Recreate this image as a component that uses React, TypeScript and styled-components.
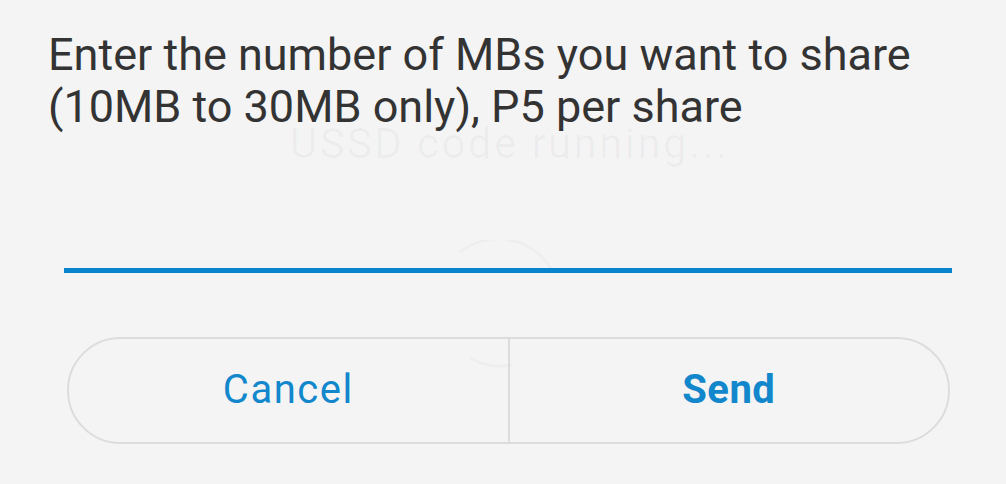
import React from "react";
import styled, { createGlobalStyle } from "styled-components";

const GlobalStyle = createGlobalStyle`
  html, body {
    margin: 0;
    padding: 0;
    background: #f4f4f4;
  }
  body {
    font-family: Roboto, "Noto Sans", "Liberation Sans", sans-serif;
  }
`;

const Dialog = styled.div`
  position: relative;
  width: 1006px;
  height: 484px;
  overflow: hidden;
  background: #f4f4f4;
  display: flex;
  flex-direction: column;
`;

// faint progress popup left behind the prompt
const Backdrop = styled.div`
  position: absolute;
  left: 0;
  top: 0;
  width: 100%;
  height: 100%;
  pointer-events: none;
`;

const GhostText = styled.div`
  position: absolute;
  left: 290px;
  top: 132px;
  font-size: 42px;
  font-weight: 400;
  letter-spacing: 2.4px;
  line-height: 24px;
  color: rgba(0, 0, 0, 0.03);
  white-space: nowrap;
`;

const Spinner = styled.svg`
  position: absolute;
  left: 440px;
  top: 240px;
`;

const Message = styled.p`
  position: relative;
  margin: 0;
  padding: 29px 48px 0;
  font-size: 45px;
  line-height: 52px;
  color: #333;
`;

const Field = styled.input`
  position: relative;
  display: block;
  box-sizing: border-box;
  margin: 85px 54px 0 64px;
  width: calc(100% - 118px);
  height: 55px;
  padding: 0;
  border: none;
  border-bottom: 5px solid #0784cc;
  background: transparent;
  font-family: inherit;
  font-size: 40px;
  color: #333;
  outline: none;
`;

const ButtonBar = styled.div`
  position: relative;
  display: flex;
  box-sizing: border-box;
  margin: 64px 56px 0 67px;
  height: 107px;
  border: 2px solid #dcdcdc;
  border-radius: 54px;
  overflow: hidden;
`;

const ActionButton = styled.button<{ primary?: boolean }>`
  flex: 1;
  display: flex;
  align-items: center;
  justify-content: center;
  padding: 0 0 2px;
  border: none;
  background: transparent;
  font-family: inherit;
  font-size: 40px;
  font-weight: ${(p) => (p.primary ? 700 : 400)};
  letter-spacing: ${(p) => (p.primary ? 0.5 : 1.5)}px;
  color: #1287cc;
  & + & {
    border-left: 2px solid #dcdcdc;
  }
`;

const App: React.FC = () => {
  return (
    <Dialog>
      <GlobalStyle />
      <Backdrop>
        <GhostText>USSD code running...</GhostText>
        <Spinner width="130" height="140" viewBox="0 0 130 140">
          <path
            d="M20 12 A 62 62 0 0 1 112 30"
            fill="none"
            stroke="rgba(0,0,0,0.025)"
            strokeWidth="3"
          />
          <path
            d="M30 118 A 62 62 0 0 0 72 125"
            fill="none"
            stroke="rgba(0,0,0,0.025)"
            strokeWidth="3"
          />
        </Spinner>
      </Backdrop>
      <Message>
        Enter the number of MBs you want to share (10MB to 30MB only), P5 per
        share
      </Message>
      <Field type="text" />
      <ButtonBar>
        <ActionButton>Cancel</ActionButton>
        <ActionButton primary>Send</ActionButton>
      </ButtonBar>
    </Dialog>
  );
};

export default App;
